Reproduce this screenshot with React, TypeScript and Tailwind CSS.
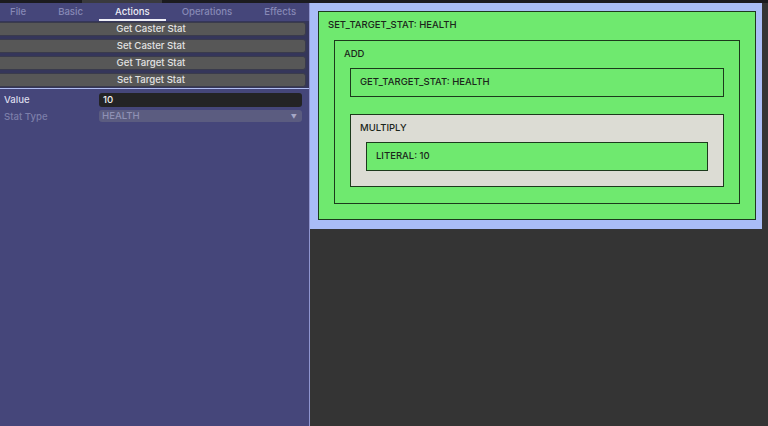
import type { ReactNode } from "react";

const tabs = ["File", "Basic", "Actions", "Operations", "Effects"];
const actions = ["Get Caster Stat", "Set Caster Stat", "Get Target Stat", "Set Target Stat"];

function Node({ label, tone = "green", children }: { label: string; tone?: "green" | "gray"; children?: ReactNode }) {
  return (
    <div
      className={`border border-[#1c3a1c] ${tone === "green" ? "bg-[#6fe96f]" : "bg-[#dcdcd4]"}`}
    >
      <div className="h-[26.5px] px-[9px] flex items-center text-[9.5px] font-medium text-[#1b261b]">{label}</div>
      {children && <div className="px-[15px] pt-[1px] pb-[15.5px] flex flex-col gap-[17px]">{children}</div>}
    </div>
  );
}

export default function App() {
  return (
    <div className="w-[768px] h-[426px] flex flex-col bg-[#1b1b1f] overflow-hidden font-['Inter',sans-serif]">
      {/* top strip */}
      <div className="h-[3px] flex shrink-0">
        <div className="w-[82px] bg-[#1b1b1f]" />
        <div className="w-[80px] bg-[#3a3a3e]" />
        <div className="flex-1 bg-[#1b1b1f]" />
      </div>

      <div className="flex flex-1 min-h-0">
        {/* left panel */}
        <div className="w-[310px] shrink-0 bg-[#45467a] flex flex-col border-r border-[#8f95d0]">
          <div className="h-[18px] flex items-stretch -ml-1.5">
            {tabs.map((t) => (
              <div
                key={t}
                className={`relative px-4 flex items-center text-[9.6px] font-medium ${t === "Actions" ? "text-[#ececf4]" : "text-[#8789b6]"}`}
              >
                {t}
                {t === "Actions" && <div className="absolute left-0 right-0 bottom-0 h-[2px] bg-[#f0f0f8]" />}
              </div>
            ))}
          </div>

          <div className="flex flex-col gap-[3px] pt-[1px] pr-[3px] pb-[1px] bg-[#35365a]">
            {actions.map((a) => (
              <div
                key={a}
                className="-ml-1 h-[14px] rounded-[3px] border border-[#3a3b4c] bg-[#575757] text-[#e2e2e2] text-[9.6px] font-medium flex items-center justify-center"
              >
                {a}
              </div>
            ))}
          </div>
          <div className="h-px bg-[#b0bcf0]" />

          <div className="pt-[4px] pl-[4px] pr-[7px] grid grid-cols-[95px_1fr] gap-y-[3px] text-[9.6px] font-medium">
            <div className="flex items-center text-[#dcdcec]">Value</div>
            <div className="h-[14px] rounded-[3px] bg-[#232325] px-[4px] flex items-center text-[#f0f0f0]">10</div>
            <div className="flex items-center text-[#7c7ea9]">Stat Type</div>
            <div className="h-[12px] rounded-[3px] bg-[#5b5c80] px-[3px] flex items-center justify-between text-[#8f91b4]">
              <span>HEALTH</span>
              <span className="text-[6px] text-[#a6a8c6] pr-[2px]">▼</span>
            </div>
          </div>
        </div>

        {/* right area */}
        <div className="flex-1 bg-[#343434] flex flex-col">
          <div className="h-[226px] w-[452px] bg-[#a9bdf6] pt-[8px] pl-[8px] pr-[6px]">
            <Node label="SET_TARGET_STAT: HEALTH">
              <Node label="ADD">
                <Node label="GET_TARGET_STAT: HEALTH" />
                <Node label="MULTIPLY" tone="gray">
                  <Node label="LITERAL: 10" />
                </Node>
              </Node>
            </Node>
          </div>
        </div>
      </div>
    </div>
  );
}
